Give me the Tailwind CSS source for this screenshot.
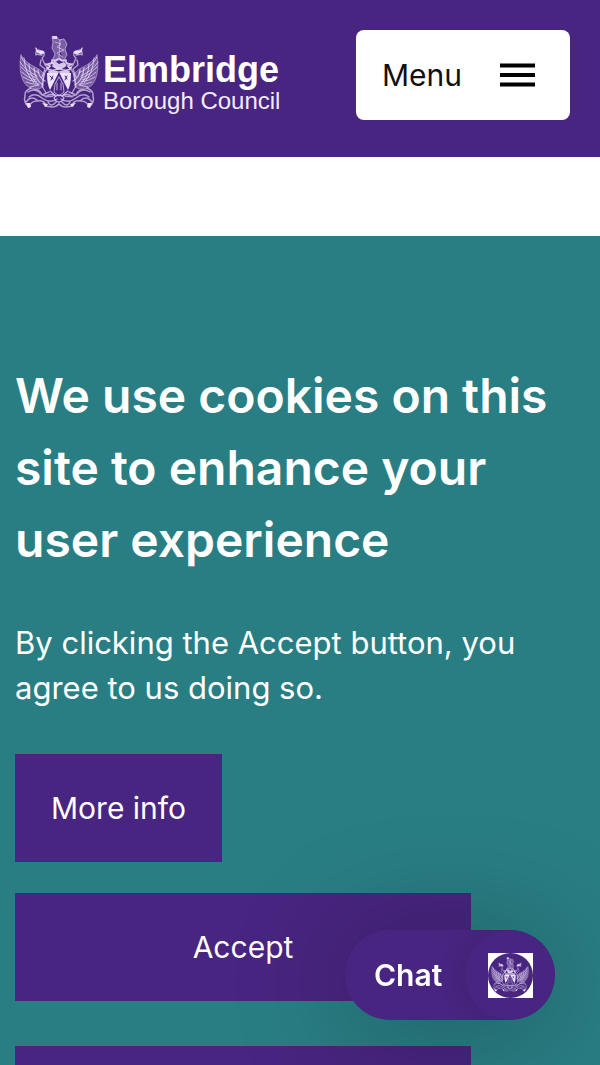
<!DOCTYPE html>
<html lang="en">
<head>
  <meta charset="UTF-8" />
  <meta name="viewport" content="width=device-width, initial-scale=1.0" />
  <title>Elmbridge Borough Council</title>
  <script src="https://cdn.jsdelivr.net/npm/@tailwindcss/browser@4"></script>
</head>
<body class="flex h-screen flex-col overflow-hidden bg-white font-['Inter',sans-serif] text-[30px] leading-[45px]">
  <!-- Coat of arms, used in the header and on the chat button -->
  <svg class="hidden" aria-hidden="true">
    <symbol id="crest" viewBox="0 0 80 76">
      <g fill="none" stroke="currentColor" stroke-linecap="round" stroke-linejoin="round">
        <g id="side">
          <!-- wing -->
          <path d="M2 20C0 32 1 44 8 51Q16 57 24 52L25 39Q21 34 16 32Q7 28 2 20Z" fill="currentColor" fill-opacity=".28" stroke-width=".7" stroke-opacity=".6" />
          <path d="M2 22Q6 31 20 38M1 27Q7 36 18 41M2 32Q8 39 17 43M3 37Q9 43 17 45M4 42Q10 46 18 47M7 47Q13 50 20 49M11 52L20 50M5 23Q6 38 15 48M10 29Q10 40 19 50" stroke-width=".9" stroke-opacity=".8" />
          <path d="M15 33Q16 45 24 50M19 35Q20 43 26 46" stroke-width="1.3" stroke-opacity=".7" />
          <!-- supporter -->
          <path d="M17 20Q16 16 20 15L25 17Q26 21 23 23L26 30L29 33L26 37L24 45L23 51L27 58M17 19L23 20M22 25L21 30L26 34L23 42" stroke-width="1.3" stroke-opacity=".65" />
          <path d="M17 13L19 16L24 16L25 18L22 19L18 17Z" fill="currentColor" stroke-width=".8" />
          <!-- base scrolls -->
          <path d="M12 53Q5 56 6 61Q4 68 10 72Q12 66 18 66Q27 65 26 71L33 72Q37 72 40 69M9 57Q15 53 20 57Q25 63 34 61M10 62Q16 57 23 63Q31 69 38 64M7 67Q12 60 18 65M14 55Q21 54 23 60L30 57M27 62Q31 57 37 61M29 67Q32 73 37 67" stroke-width="1.5" stroke-opacity=".65" />
          <path d="M7 68L11 68L12 72L9 73ZM23 68L29 69L27 72Z" fill="currentColor" stroke="none" />
          <!-- mantling -->
          <path d="M39 34Q31 37 28 33Q33 32 29 29Q34 29 33 25Q37 27 39 24M27 29L31 31M30 37L39 37M34 31L39 34" stroke-width="1.8" stroke-opacity=".85" />
          <!-- half shield -->
          <path d="M28 38H39.500L31 55Q28 50 28 38Z" fill="currentColor" stroke="none" />
          <path d="M40 42L36 49L35 57L40 61M38 48V55" stroke-width="1" stroke-opacity=".7" />
          <path d="M31 56L36 60M35 63Q37 60 40 60M35 63Q37 67 40 67" stroke-width="1.1" stroke-opacity=".8" />
        </g>
        <use href="#side" transform="matrix(-1 0 0 1 80 0)" />
        <!-- charges on the shield -->
        <path d="M31 41L34 44M34 41L32 45M46 41L48 44M48 41L46 45" stroke="#482580" stroke-width="1" />
        <!-- helm and top figure -->
        <path d="M34 24L36 19L33 13L34 7L33 2L38 2L40 5L45 4L48 9L46 14L48 20L45 25ZM36 7L42 9L38 12L45 15L38 18L44 22M41 5L40 23" fill="currentColor" fill-opacity=".3" stroke-width="1" stroke-opacity=".55" />
        <path d="M33 1L38 1L38 4L34 4ZM32 28L36 26L40 29L45 27L48 30L43 32L40 35L36 32Z" fill="currentColor" fill-opacity=".85" stroke="none" />
      </g>
    </symbol>
  </svg>

  <header class="flex h-[157px] shrink-0 items-start justify-between bg-[#482580] px-[30px] pt-[30px]">
    <a href="#" class="-ml-[11px] mt-[5px] flex items-start gap-1 font-['Liberation_Sans',sans-serif] text-white">
      <svg class="h-[76px] w-20 text-[#eee3fb]" aria-hidden="true"><use href="#crest" /></svg>
      <span class="flex flex-col pt-4">
        <span class="text-[36px] font-bold leading-[38px]">Elmbridge</span>
        <span class="text-[24px] leading-[24px] text-[#f3ebff]">Borough Council</span>
      </span>
    </a>
    <button type="button" class="flex h-[90px] w-[214px] items-center justify-between rounded-lg bg-white pl-[26px] pr-[35px] text-[#111]">
      Menu
      <svg class="h-6 w-[35px]" viewBox="0 0 35 24" stroke="#000" stroke-width="4" aria-hidden="true">
        <path d="M0 2.500H35M0 12H35M0 21.500H35" />
      </svg>
    </button>
  </header>

  <section class="mt-[79px] min-h-0 flex-1 overflow-hidden bg-[#297e84] px-[15px] pt-[124px] text-white" aria-label="Cookies">
    <h2 class="text-[48px] font-semibold leading-[72px]">We use cookies on this site to enhance your user experience</h2>
    <p class="mt-11 text-[31px]">By clicking the Accept button, you agree to us doing so.</p>
    <button type="button" class="mt-11 block h-[108px] bg-[#482580] px-9">More info</button>
    <div class="mt-[31px] flex w-4/5 flex-col gap-[45px]">
      <button type="button" class="h-[108px] bg-[#482580]">Accept</button>
      <button type="button" class="h-[108px] bg-[#482580]" aria-label="Decline"></button>
    </div>
  </section>

  <button type="button" class="fixed bottom-[45px] right-[45px] flex h-[90px] w-[210px] items-center justify-between overflow-hidden rounded-full bg-[#482580] pl-[29px] font-semibold text-white shadow-[0_8px_120px_rgba(0,0,0,0.3)]">
    Chat
    <span class="flex size-[90px] items-center justify-center rounded-full bg-[#482580] shadow-[0_0_30px_rgba(0,0,0,0.12)]">
      <span class="flex size-[45px] bg-white">
        <span class="flex size-[45px] items-center justify-center rounded-full bg-[#482580]">
          <svg class="h-9 w-10 text-[#eee3fb]" aria-hidden="true"><use href="#crest" /></svg>
        </span>
      </span>
    </span>
  </button>
</body>
</html>
